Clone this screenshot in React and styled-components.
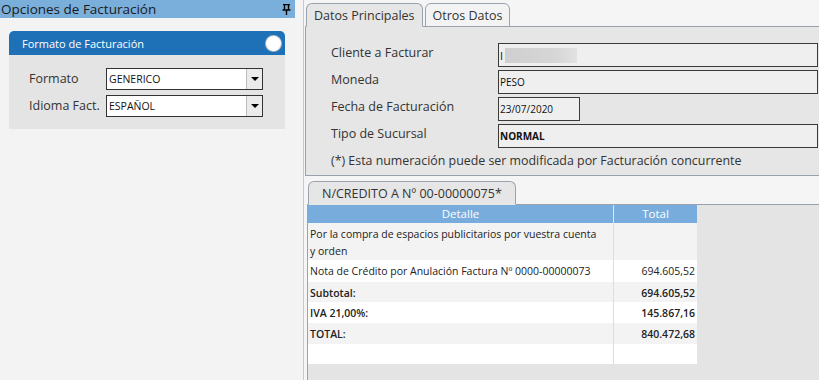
import React from "react";
import styled, { createGlobalStyle } from "styled-components";

const GlobalStyle = createGlobalStyle`
  body {
    margin: 0;
    font-family: "Open Sans", "DejaVu Sans", sans-serif;
    background: #f3f3f3;
    color: #2b2b2b;
  }
`;

const rows = [
  { detail: "Por la compra de espacios publicitarios por vuestra cuenta y orden", total: "", h: 37 },
  { detail: "Nota de Crédito por Anulación Factura Nº 0000-00000073", total: "694.605,52", h: 22 },
  { detail: "Subtotal:", total: "694.605,52", h: 20, bold: true },
  { detail: "IVA 21,00%:", total: "145.867,16", h: 21, bold: true },
  { detail: "TOTAL:", total: "840.472,68", h: 21, bold: true },
  { detail: "", total: "", h: 20 },
];

const App = () => {
  return (
    <>
      <GlobalStyle />
      <Page>
        <LeftPane>
          <PaneHeader>
            <span>Opciones de Facturación</span>
            <svg width="9" height="11" viewBox="0 0 9 11">
              <path d="M1 0.5h7M2.5 0.5v5M6.5 0.5v5M0.5 6h8M4.5 6v5" stroke="#000" strokeWidth="1.4" fill="none" />
            </svg>
          </PaneHeader>
          <Box>
            <BoxHeader>
              <span>Formato de Facturación</span>
              <Circle />
            </BoxHeader>
            <BoxBody>
              <FieldRow>
                <FieldLabel>Formato</FieldLabel>
                <Select>
                  <span>GENERICO</span>
                  <DropButton><Arrow /></DropButton>
                </Select>
              </FieldRow>
              <FieldRow>
                <FieldLabel>Idioma Fact.</FieldLabel>
                <Select>
                  <span>ESPAÑOL</span>
                  <DropButton><Arrow /></DropButton>
                </Select>
              </FieldRow>
            </BoxBody>
          </Box>
        </LeftPane>

        <RightPane>
          <TabRow>
            <Tab $active>Datos Principales</Tab>
            <Tab>Otros Datos</Tab>
          </TabRow>
          <Panel>
            <FormRow>
              <FormLabel>Cliente a Facturar</FormLabel>
              <Input>
                <Hidden>I</Hidden>
                <Blur />
              </Input>
            </FormRow>
            <FormRow>
              <FormLabel>Moneda</FormLabel>
              <Input>PESO</Input>
            </FormRow>
            <FormRow>
              <FormLabel>Fecha de Facturación</FormLabel>
              <Input $w={82}>23/07/2020</Input>
            </FormRow>
            <FormRow>
              <FormLabel>Tipo de Sucursal</FormLabel>
              <Input $bold>NORMAL</Input>
            </FormRow>
            <Note>(*) Esta numeración puede ser modificada por Facturación concurrente</Note>
          </Panel>

          <LowerTabRow>
            <Tab $active $wide>N/CREDITO A Nº 00-00000075*</Tab>
          </LowerTabRow>
          <LowerArea>
            <Table>
              <HeadRow>
                <HeadCell>Detalle</HeadCell>
                <HeadCell>Total</HeadCell>
              </HeadRow>
              {rows.map((r, i) => (
                <BodyRow key={i} $odd={i % 2 === 0} $h={r.h} $bold={r.bold}>
                  <DetailCell>{r.detail}</DetailCell>
                  <TotalCell>{r.total}</TotalCell>
                </BodyRow>
              ))}
            </Table>
          </LowerArea>
        </RightPane>
      </Page>
    </>
  );
};
export default App;

const Page = styled.div`
  display: flex;
  width: 819px;
  height: 380px;
  overflow: hidden;
`;

const LeftPane = styled.div`
  width: 303px;
  flex-shrink: 0;
  border-right: 1px solid #c9c9c9;
  background: #f3f3f3;
`;

const PaneHeader = styled.div`
  width: 295px;
  height: 18px;
  background: #7aaedb;
  display: flex;
  align-items: center;
  justify-content: space-between;
  padding: 0 4px 0 1px;
  box-sizing: border-box;
  font-size: 13.5px;
  color: #1a1a1a;
`;

const Box = styled.div`
  margin: 13px 0 0 9px;
  width: 276px;
`;

const BoxHeader = styled.div`
  height: 24px;
  background: #1f71b7;
  border-radius: 5px 5px 0 0;
  color: #fff;
  font-size: 11px;
  display: flex;
  align-items: center;
  justify-content: space-between;
  padding: 0 4px 0 13px;
`;

const Circle = styled.div`
  width: 15px;
  height: 15px;
  border-radius: 50%;
  background: #fff;
  box-shadow: 0 0 0 1px #aebccb;
`;

const BoxBody = styled.div`
  background: #e4e4e4;
  height: 74px;
  padding: 13px 0 0 19px;
  box-sizing: border-box;
  display: flex;
  flex-direction: column;
  gap: 5px;
`;

const FieldRow = styled.div`
  display: flex;
  align-items: center;
`;

const FieldLabel = styled.div`
  width: 77px;
  font-size: 12.5px;
  color: #333;
  padding-left: 1px;
  margin-top: -2px;
`;

const Select = styled.div`
  width: 157px;
  height: 22px;
  box-sizing: border-box;
  border: 1px solid #333;
  background: #fff;
  display: flex;
  align-items: center;
  justify-content: space-between;
  font-size: 10.5px;
  padding-left: 2px;
  color: #111;
`;

const DropButton = styled.div`
  width: 15px;
  height: 100%;
  background: #ebebeb;
  border-left: 1px solid #bdbdbd;
  display: flex;
  align-items: center;
  justify-content: center;
`;

const Arrow = styled.div`
  width: 0;
  height: 0;
  border-left: 4px solid transparent;
  border-right: 4px solid transparent;
  border-top: 4px solid #000;
`;

const RightPane = styled.div`
  flex: 1;
  background: #f5f5f5;
  padding-left: 1px;
  display: flex;
  flex-direction: column;
`;

const TabRow = styled.div`
  display: flex;
  gap: 2px;
  padding-top: 3px;
  padding-left: 1px;
  margin-bottom: -1px;
  position: relative;
  z-index: 1;
`;

const Tab = styled.div`
  height: 24px;
  box-sizing: border-box;
  padding: 0 ${(p) => (p.$wide ? "13px" : "7px")};
  border: 1px solid #9aa3ad;
  border-bottom: ${(p) => (p.$active ? "1px solid #e6e6e6" : "1px solid #9aa3ad")};
  border-radius: 6px 6px 0 0;
  background: ${(p) => (p.$active ? "#e6e6e6" : "#f3f3f3")};
  font-size: 12.5px;
  color: #333;
  display: flex;
  align-items: center;
  min-width: ${(p) => (p.$wide ? "207px" : "auto")};
`;

const Panel = styled.div`
  height: 150px;
  box-sizing: border-box;
  background: #e6e6e6;
  border: 1px solid #9aa3ad;
  border-right: none;
  padding: 16px 0 0 25px;
  display: flex;
  flex-direction: column;
  gap: 3px;
`;

const FormRow = styled.div`
  display: flex;
  align-items: center;
`;

const FormLabel = styled.div`
  width: 167px;
  font-size: 12.5px;
  color: #333;
  margin-top: -5px;
`;

const Input = styled.div`
  width: ${(p) => (p.$w ? `${p.$w}px` : "320px")};
  height: 24px;
  box-sizing: border-box;
  border: 1px solid #3a3a3a;
  background: #efefef;
  font-size: 10px;
  font-weight: ${(p) => (p.$bold ? 700 : 400)};
  color: #111;
  display: flex;
  align-items: center;
  padding-left: 1px;
`;

const Hidden = styled.span`
  font-size: 11px;
`;

const Blur = styled.div`
  width: 72px;
  height: 15px;
  margin-left: 2px;
  background: linear-gradient(90deg, #cfcfcf, #d6d6d6 70%, #e2e2e2);
`;

const Note = styled.div`
  font-size: 12.4px;
  color: #333;
  margin-top: 1px;
`;

const LowerTabRow = styled.div`
  display: flex;
  padding-top: 5px;
  padding-left: 3px;
  margin-bottom: -1px;
  position: relative;
  z-index: 1;
`;

const LowerArea = styled.div`
  flex: 1;
  background: #e4e4e4;
  border-top: 1px solid #9aa3ad;
  border-left: 1px solid #9aa3ad;
  margin-left: 2px;
`;

const Table = styled.div`
  width: 389px;
  font-size: 10.5px;
  color: #222;
`;

const HeadRow = styled.div`
  display: grid;
  grid-template-columns: 305px 84px;
  height: 18px;
  background: #78acdc;
`;

const HeadCell = styled.div`
  color: #fff;
  text-align: center;
  line-height: 18px;
  font-size: 11.5px;
  & + & {
    border-left: 1px solid #e3e8ee;
  }
`;

const BodyRow = styled.div`
  display: grid;
  grid-template-columns: 305px 84px;
  height: ${(p) => p.$h}px;
  background: ${(p) => (p.$odd ? "#f3f3f3" : "#ffffff")};
  font-weight: ${(p) => (p.$bold ? 600 : 400)};
`;

const DetailCell = styled.div`
  padding: 3px 10px 0 2px;
  line-height: 17px;
`;

const TotalCell = styled.div`
  border-left: 1px solid #dddddd;
  text-align: right;
  padding: 3px 2px 0 0;
  line-height: 17px;
`;
